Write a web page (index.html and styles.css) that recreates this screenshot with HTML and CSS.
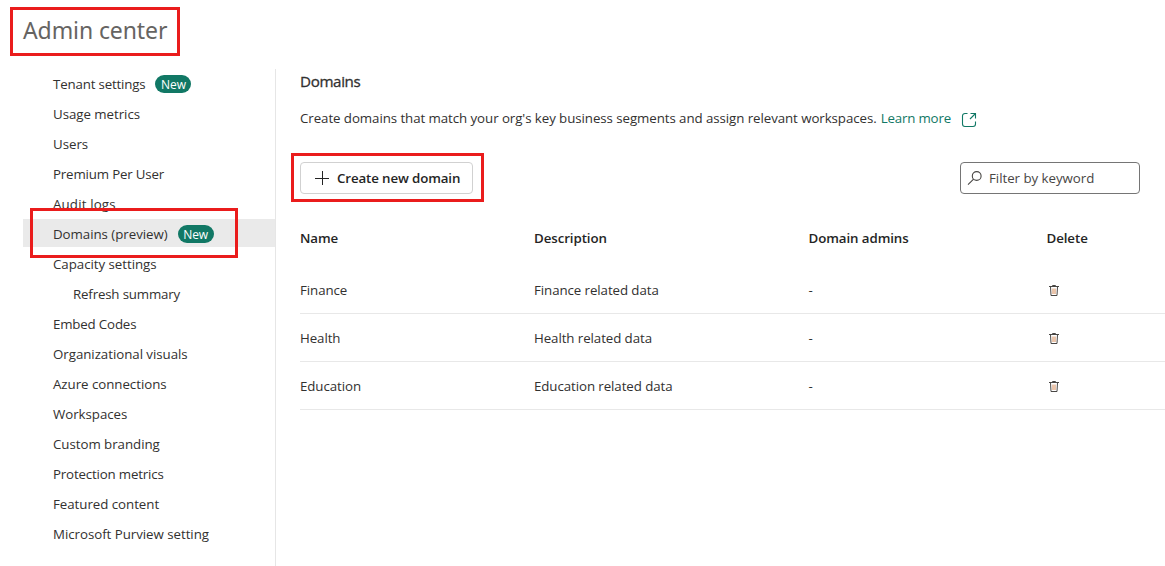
FILE: index.html
```html
<!DOCTYPE html>
<html lang="en">
<head>
<meta charset="utf-8">
<title>Admin center</title>
<link rel="stylesheet" href="styles.css">
</head>
<body>
<div class="app">
  <header class="header"><h1 class="app-title">Admin center</h1></header>
  <div class="layout">
    <nav class="sidebar">
      <a class="nav-item nav-item-tight"><span>Tenant settings</span><span class="badge">New</span></a>
      <a class="nav-item">Usage metrics</a>
      <a class="nav-item">Users</a>
      <a class="nav-item nav-item-tight">Premium Per User</a>
      <a class="nav-item nav-item-wide">Audit logs</a>
      <a class="nav-item nav-item-active"><span>Domains (preview)</span><span class="badge">New</span></a>
      <a class="nav-item">Capacity settings</a>
      <a class="nav-item nav-item-tight nav-item-child">Refresh summary</a>
      <a class="nav-item nav-item-tight">Embed Codes</a>
      <a class="nav-item">Organizational visuals</a>
      <a class="nav-item">Azure connections</a>
      <a class="nav-item">Workspaces</a>
      <a class="nav-item">Custom branding</a>
      <a class="nav-item nav-item-tight">Protection metrics</a>
      <a class="nav-item">Featured content</a>
      <a class="nav-item">Microsoft Purview setting</a>
    </nav>
    <main class="main">
      <h2 class="page-title">Domains</h2>
      <p class="intro"><span>Create domains that match your org's key business segments and assign relevant workspaces.</span>
        <a class="learn-more">Learn more</a>
        <svg class="open-icon" viewBox="0 0 16 16"><path d="M6.500 1.500H4A2.500 2.500 0 0 0 1.500 4v8A2.500 2.500 0 0 0 4 14.500h8a2.500 2.500 0 0 0 2.500-2.500V9.500M9.500 1.500h5v5M14.500 1.500 9 7"/></svg>
      </p>
      <div class="toolbar">
        <button class="create-button">
          <svg class="plus-icon" viewBox="0 0 14 14"><path d="M7.500 0v14M0 7.500h14"/></svg>
          <span>Create new domain</span>
        </button>
        <div class="filter">
          <svg class="search-icon" viewBox="0 0 16 16"><circle cx="9.700" cy="6" r="4.400"/><path d="M6.600 9.100 1 14.700"/></svg>
          <span>Filter by keyword</span>
        </div>
      </div>
      <div class="table">
        <div class="row row-head"><span>Name</span><span>Description</span><span>Domain admins</span><span>Delete</span></div>
        <div class="row"><span>Finance</span><span>Finance related data</span><span>-</span><span class="delete-cell"><svg class="trash-icon" viewBox="0 0 10 11"><path d="M0 1.500h10M3.500 1.500v-1h3v1M1.500 1.500l.5 9h6l.5-9"/><path class="trash-ribs" d="M4 3.500v5.500M6 3.500v5.500"/></svg></span></div>
        <div class="row"><span>Health</span><span>Health related data</span><span>-</span><span class="delete-cell"><svg class="trash-icon" viewBox="0 0 10 11"><path d="M0 1.500h10M3.500 1.500v-1h3v1M1.500 1.500l.5 9h6l.5-9"/><path class="trash-ribs" d="M4 3.500v5.500M6 3.500v5.500"/></svg></span></div>
        <div class="row"><span>Education</span><span>Education related data</span><span>-</span><span class="delete-cell"><svg class="trash-icon" viewBox="0 0 10 11"><path d="M0 1.500h10M3.500 1.500v-1h3v1M1.500 1.500l.5 9h6l.5-9"/><path class="trash-ribs" d="M4 3.500v5.500M6 3.500v5.500"/></svg></span></div>
      </div>
    </main>
  </div>
  <div class="callout callout-title"></div>
  <div class="callout callout-nav"></div>
  <div class="callout callout-create"></div>
</div>
</body>
</html>
```

FILE: styles.css
```css
* { box-sizing: border-box; }
body { margin: 0; background: #fff; color: #323130; font: 13.3px/20px "Open Sans", "Noto Sans", sans-serif; letter-spacing: -.04px; }
h1, h2, p { margin: 0; font-weight: 400; }
.app { position: relative; width: 1165px; height: 566px; overflow: hidden; }
.header { height: 69px; padding: 13px 0 0 23px; }
.app-title { font-family: "Noto Sans", sans-serif; font-weight: 400; font-size: 23px; line-height: 34px; letter-spacing: -.1px; color: #666462; }
.layout { display: flex; height: 497px; }
.sidebar { width: 253px; margin-left: 23px; border-right: 1px solid #e6e6e6; flex: none; }
.nav-item { display: flex; align-items: center; height: 28px; margin-bottom: 2px; padding: 2px 0 0 30px; white-space: nowrap; }
.nav-item-tight { letter-spacing: -.17px; }
.nav-item-wide { letter-spacing: .15px; }
.nav-item-child { padding-left: 50px; }
.nav-item-active { background: #eaeaea; }
.badge { height: 18px; width: 36px; margin-left: 10px; border-radius: 9px; background: #117865; color: #fff; font-size: 12px; line-height: 19px; letter-spacing: -.1px; text-align: center; }
.main { flex: 1; min-width: 0; padding: 2px 0 0 24px; white-space: nowrap; }
.page-title { font-size: 15.200px; line-height: 21px; letter-spacing: -.38px; -webkit-text-stroke: .3px #323130; }
.intro { display: flex; align-items: center; height: 20px; margin-top: 16px; gap: 4px; letter-spacing: -.07px; }
.learn-more { color: #117865; letter-spacing: -.17px; }
.open-icon { width: 16px; height: 16px; margin: 3px 0 0 6px; fill: none; stroke: #117865; stroke-width: 1.1; }
.toolbar { display: flex; justify-content: space-between; margin: 34px 25px 0 0; }
.create-button { display: flex; align-items: center; gap: 8px; width: 173px; height: 32px; padding: 0 0 0 14px; border: 1px solid #d1d1d1; border-radius: 4px; background: #fff; color: #242424; font: 600 13.300px "Open Sans", sans-serif; letter-spacing: -.12px; }
.plus-icon { width: 14px; height: 14px; fill: none; stroke: #242424; stroke-width: 1; }
.filter { display: flex; align-items: center; gap: 5px; width: 180px; height: 32px; padding-left: 7px; border: 1px solid #757575; border-radius: 4px; color: #484644; }
.search-icon { width: 16px; height: 16px; margin-left: -1px; margin-right: 1px; fill: none; stroke: #484644; stroke-width: 1.1; }
.table { margin-top: 20px; }
.row { display: grid; grid-template-columns: 234px 274.500px 238px 1fr; align-items: center; height: 48px; border-bottom: 1px solid #e8e8e8; letter-spacing: -.08px; }
.row-head { height: 52px; padding-bottom: 5px; border-bottom: 0; font-weight: 600; color: #242424; }
.delete-cell { display: flex; padding: 2px 0 0 2px; }
.trash-icon { width: 10px; height: 11px; fill: none; stroke: #484644; stroke-width: 1; }
.trash-ribs { stroke: #d68a56; }
.callout { position: absolute; border: 3px solid #ea1c1c; }
.callout-title { left: 10px; top: 7px; width: 170px; height: 49px; }
.callout-nav { left: 30px; top: 208px; width: 208px; height: 50px; }
.callout-create { left: 291px; top: 153px; width: 193px; height: 49px; }
```
